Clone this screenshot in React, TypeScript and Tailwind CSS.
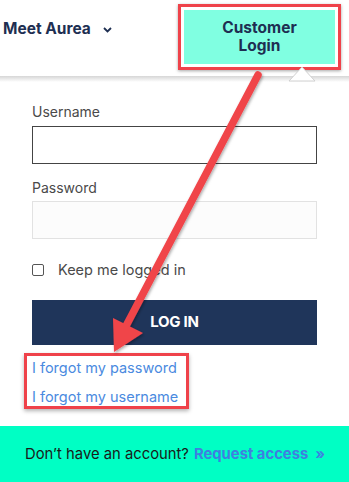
import React from "react";

export default function App() {
  const font = { fontFamily: '"Inter", "Lato", sans-serif' };
  return (
    <div className="relative w-[349px] h-[482px] overflow-hidden bg-white" style={font}>
      {/* header */}
      <div className="h-[76px] flex items-start justify-between">
        <div className="flex items-center gap-[12px] pl-[3px] pt-[19px]">
          <span className="text-[15.5px] font-bold text-[#1e2f52] leading-[20px]">Meet Aurea</span>
          <svg width="9" height="6" viewBox="0 0 9 6" className="mt-[2px]">
            <path d="M1 1 L4.5 4.5 L8 1" fill="none" stroke="#1e2f52" strokeWidth="1.8" />
          </svg>
        </div>
        <div className="mt-[4px] mr-[8px] w-[163px] h-[66px] border-[3px] border-[#ef424a] p-[3px] bg-white shadow-[0_1px_3px_rgba(0,0,0,0.35)]">
          <div className="w-full h-full bg-[#80ffe1] flex flex-col items-center justify-center text-[15.5px] font-bold leading-[18px] text-[#1e2f52]">
            <span>Customer</span>
            <span>Login</span>
          </div>
        </div>
      </div>
      <div className="h-[6px] bg-gradient-to-b from-[#d6d6d6] to-white" />

      {/* form */}
      <div className="px-[32px] pt-[21px] flex flex-col">
        <label className="text-[14px] text-[#4a4a4a] leading-[18px]">Username</label>
        <div className="mt-[5px] h-[38px] border border-[#444] bg-white" />
        <label className="mt-[15px] text-[14px] text-[#4a4a4a] leading-[18px]">Password</label>
        <div className="mt-[4px] h-[38px] border border-[#e2e2e2] bg-[#fcfcfc]" />
        <div className="mt-[22px] flex items-center gap-[14px]">
          <div className="w-[12px] h-[12px] border border-[#555] rounded-[2px]" />
          <span className="text-[14.5px] text-[#4a4a4a] leading-[18px]">Keep me logged in</span>
        </div>
        <div className="mt-[21px] h-[45px] bg-[#1f355a] flex items-center justify-center text-white font-bold text-[15px] tracking-[-0.3px]">
          LOG IN
        </div>
      </div>

      {/* links */}
      <div className="ml-[24px] mt-[8px] w-[165px] border-[3px] border-[#ef424a] pl-[5px] pt-[3px] flex flex-col gap-[11px] shadow-[0_2px_4px_rgba(0,0,0,0.3)]">
        <span className="text-[14.5px] text-[#4a8ae0] leading-[18px]">I forgot my password</span>
        <span className="text-[14.5px] text-[#4a8ae0] leading-[18px]">I forgot my username</span>
      </div>

      {/* footer */}
      <div className="absolute left-0 right-0 bottom-0 h-[56px] bg-[#00ffc4] flex items-center pl-[25px] text-[14.8px]">
        <span className="text-[#1a1a1a]">Don’t have an account?</span>
        <span className="ml-[5px] font-bold text-[#3f7fe0]">Request access</span>
        <span className="ml-[7px] text-[#3f7fe0] font-bold">»</span>
      </div>

      {/* pointer triangle */}
      <svg className="absolute left-[284px] top-[64px]" width="36" height="18" viewBox="0 0 36 18">
        <path d="M5 17 L18 3 L31 17 Z" fill="#ffffff" stroke="#d0d0d0" strokeWidth="1" />
      </svg>

      {/* arrow */}
      <svg className="absolute left-0 top-0 pointer-events-none" width="349" height="482" viewBox="0 0 349 482">
        <defs>
          <filter id="sh" x="-20%" y="-20%" width="140%" height="140%">
            <feDropShadow dx="1" dy="1.5" stdDeviation="1.5" floodColor="#000" floodOpacity="0.35" />
          </filter>
        </defs>
        <g filter="url(#sh)">
          <line x1="258" y1="75" x2="126" y2="326" stroke="#f0444a" strokeWidth="7.5" strokeLinecap="round" />
          <path d="M114 352 L113 318 L143 333 Z" fill="#f0444a" />
        </g>
      </svg>
    </div>
  );
}
